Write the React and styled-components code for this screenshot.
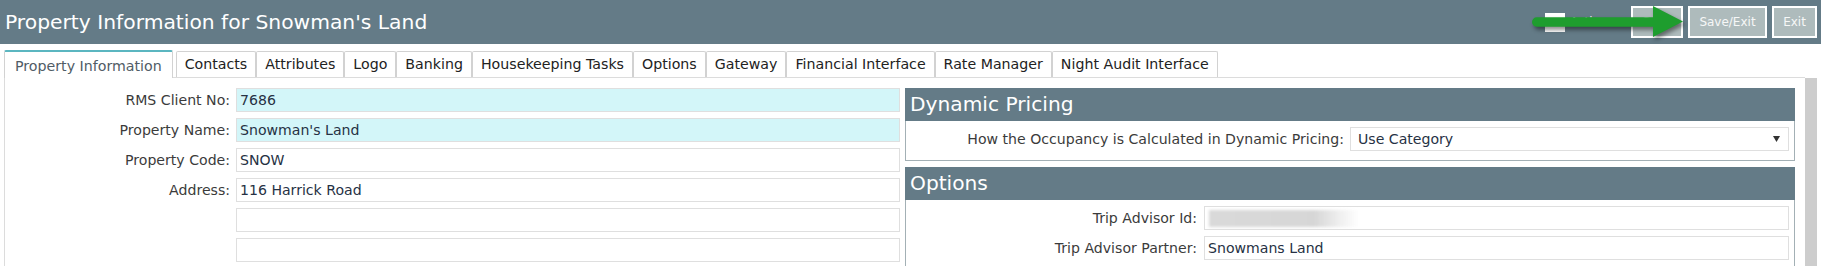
import React from "react";
import styled, { createGlobalStyle } from "styled-components";

const GlobalStyle = createGlobalStyle`
  html, body { margin: 0; padding: 0; background: #fff; }
  body { font-family: "DejaVu Sans", Verdana, sans-serif; }
  * { box-sizing: border-box; }
`;

const Page = styled.div`
  width: 1821px;
  height: 266px;
  overflow: hidden;
  background: #fff;
`;

const TitleBar = styled.header`
  position: relative;
  height: 44px;
  background: #647b87;
  display: flex;
  align-items: center;
  justify-content: space-between;
  padding: 0 4px 0 5px;
`;

const Title = styled.h1`
  margin: 0;
  font-size: 20.3px;
  font-weight: normal;
  line-height: 44px;
  color: #fff;
  white-space: nowrap;
`;

const Actions = styled.div`
  display: flex;
  align-items: center;
  gap: 5px;
`;

const CheckGroup = styled.label`
  display: flex;
  align-items: center;
  gap: 5px;
  margin-right: 19px;
  font-size: 12px;
  color: #eef2f4;
`;

const CheckBox = styled.span`
  display: block;
  width: 20px;
  height: 19px;
  background: #fff;
`;

const ToolButton = styled.button`
  height: 32px;
  min-width: ${(p) => p.$w}px;
  padding: 0 8px;
  border: 2px solid #fff;
  background: #aebbbc;
  color: #f6f7f7;
  font-family: "DejaVu Sans", Verdana, sans-serif;
  font-size: 12px;
  cursor: pointer;
`;

const ArrowOverlay = styled.svg`
  position: absolute;
  left: 1526px;
  top: 0;
  width: 164px;
  height: 44px;
  overflow: visible;
  filter: drop-shadow(2px 3px 2px rgba(0, 0, 0, 0.45));
  pointer-events: none;
`;

const TabStrip = styled.nav`
  display: flex;
  align-items: flex-end;
  height: 28px;
  margin: 6px 16px 0 4px;
  border-bottom: 1px solid #dcdcdc;
`;

const Tab = styled.div`
  height: ${(p) => (p.$active ? 28 : 26)}px;
  margin-bottom: ${(p) => (p.$active ? -1 : 0)}px;
  margin-right: ${(p) => (p.$active ? 3 : 0)}px;
  padding: ${(p) => (p.$active ? "6px 10px 0" : "4px 8px 0")};
  border: 1px solid #d2d2d2;
  border-bottom: none;
  border-top: ${(p) => (p.$active ? "2px solid #5bb6c0" : "1px solid #d2d2d2")};
  border-radius: 2px 2px 0 0;
  background: #fff;
  font-size: 14.2px;
  line-height: 17px;
  color: ${(p) => (p.$active ? "#505c66" : "#222")};
  white-space: nowrap;
`;

const Main = styled.div`
  display: flex;
  height: 188px;
`;

const Panel = styled.div`
  flex: 1;
  margin-left: 4px;
  border-left: 1px solid #dcdcdc;
  padding-top: 10px;
  display: flex;
  gap: 5px;
  align-items: flex-start;
`;

const LeftCol = styled.div`
  width: 895px;
  display: flex;
  flex-direction: column;
  gap: 6px;
`;

const RightCol = styled.div`
  flex: 1;
  display: flex;
  flex-direction: column;
  gap: 6px;
`;

const FormRow = styled.div`
  display: grid;
  grid-template-columns: ${(p) => p.$label}px 1fr;
  column-gap: ${(p) => p.$gap}px;
  align-items: center;
`;

const Label = styled.span`
  text-align: right;
  font-size: 14.1px;
  line-height: 24px;
  color: #3b3b3b;
  white-space: nowrap;
`;

const Field = styled.div`
  height: 24px;
  display: flex;
  align-items: center;
  border: 1px solid #dfdfdf;
  background: ${(p) => (p.$highlight ? "#d3f6f9" : "#fff")};
  padding: 0 4px 0 3px;
  font-size: 14.1px;
  color: #263144;
  white-space: nowrap;
  overflow: hidden;
`;

const SelectBox = styled.div`
  height: 24px;
  display: flex;
  align-items: center;
  justify-content: space-between;
  border: 1px solid #dfdfdf;
  background: #fff;
  padding: 0 8px 0 7px;
  font-size: 14.1px;
  color: #263144;
  white-space: nowrap;
`;

const Redacted = styled.span`
  display: block;
  width: 150px;
  height: 17px;
  margin-left: 1px;
  background: linear-gradient(to right, #d9d9d9 0%, #d6d6d6 70%, rgba(230, 230, 230, 0.6) 88%, rgba(255, 255, 255, 0) 100%);
  filter: blur(1.5px);
`;

const Section = styled.section`
  display: flex;
  flex-direction: column;
`;

const SectionHeader = styled.h2`
  margin: 0;
  height: 33px;
  line-height: 33px;
  padding-left: 5px;
  background: #647b87;
  color: #fff;
  font-size: 20.2px;
  font-weight: normal;
`;

const SectionBody = styled.div`
  border: 1px solid #a3b0b5;
  border-top: none;
  padding: 6px 5px 9px 0;
  display: flex;
  flex-direction: column;
  gap: 6px;
`;

const ScrollTrack = styled.div`
  width: 26px;
  padding: 0 4px 0 10px;
`;

const ScrollThumb = styled.div`
  height: 100%;
  background: #cdcdcd;
`;

const tabs = [
  "Property Information",
  "Contacts",
  "Attributes",
  "Logo",
  "Banking",
  "Housekeeping Tasks",
  "Options",
  "Gateway",
  "Financial Interface",
  "Rate Manager",
  "Night Audit Interface",
];

const propertyRows = [
  { label: "RMS Client No:", value: "7686", highlight: true },
  { label: "Property Name:", value: "Snowman's Land", highlight: true },
  { label: "Property Code:", value: "SNOW" },
  { label: "Address:", value: "116 Harrick Road" },
  { label: "", value: "" },
  { label: "", value: "" },
];

export default function App() {
  return (
    <Page>
      <GlobalStyle />
      <TitleBar>
        <Title>Property Information for Snowman's Land</Title>
        <Actions>
          <CheckGroup>
            <CheckBox />
            Active
          </CheckGroup>
          <ToolButton $w={52}>Save</ToolButton>
          <ToolButton $w={79}>Save/Exit</ToolButton>
          <ToolButton $w={45}>Exit</ToolButton>
        </Actions>
        <ArrowOverlay viewBox="0 0 164 44">
          <rect x="6" y="17.3" width="127" height="9.4" rx="4.7" fill="#1e9d2e" />
          <polygon points="127,6 157,21.5 127,37" fill="#1e9d2e" />
        </ArrowOverlay>
      </TitleBar>

      <TabStrip>
        {tabs.map((t, i) => (
          <Tab key={t} $active={i === 0}>
            {t}
          </Tab>
        ))}
      </TabStrip>

      <Main>
        <Panel>
          <LeftCol>
            {propertyRows.map((r, i) => (
              <FormRow key={i} $label={225} $gap={6}>
                <Label>{r.label}</Label>
                <Field $highlight={r.highlight}>{r.value}</Field>
              </FormRow>
            ))}
          </LeftCol>

          <RightCol>
            <Section>
              <SectionHeader>Dynamic Pricing</SectionHeader>
              <SectionBody>
                <FormRow $label={438} $gap={6}>
                  <Label>How the Occupancy is Calculated in Dynamic Pricing:</Label>
                  <SelectBox>
                    Use Category
                    <svg width="7" height="6" viewBox="0 0 7 6">
                      <polygon points="0,0 7,0 3.5,6" fill="#333" />
                    </svg>
                  </SelectBox>
                </FormRow>
              </SectionBody>
            </Section>

            <Section>
              <SectionHeader>Options</SectionHeader>
              <SectionBody>
                <FormRow $label={291} $gap={7}>
                  <Label>Trip Advisor Id:</Label>
                  <Field>
                    <Redacted />
                  </Field>
                </FormRow>
                <FormRow $label={291} $gap={7}>
                  <Label>Trip Advisor Partner:</Label>
                  <Field>Snowmans Land</Field>
                </FormRow>
              </SectionBody>
            </Section>
          </RightCol>
        </Panel>
        <ScrollTrack>
          <ScrollThumb />
        </ScrollTrack>
      </Main>
    </Page>
  );
}
